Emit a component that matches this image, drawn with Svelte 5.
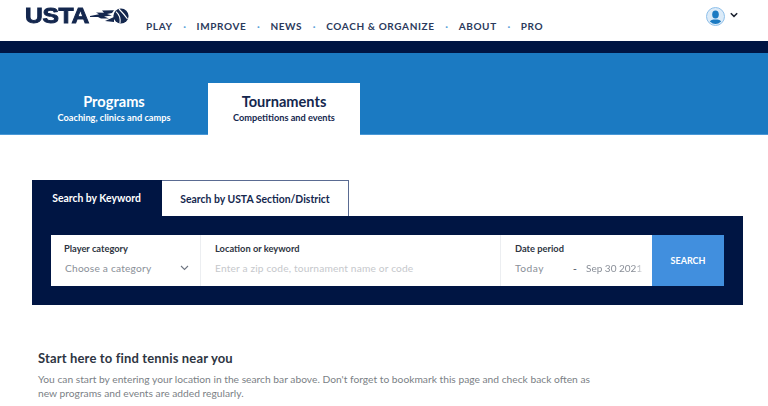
<script>
  const navItems = ['PLAY', 'IMPROVE', 'NEWS', 'COACH & ORGANIZE', 'ABOUT', 'PRO'];
</script>

<div class="page">
  <header class="top">
    <div class="logo">
      <span class="wordmark">USTA</span>
      <svg class="flame" width="40" height="16" viewBox="0 0 40 16" aria-hidden="true">
        <path d="M0 8 L9 6.2 L6 4.6 L14 4.8 L12 2.6 L24 2.2 L22 5 L17 6 L22 7.4 L14 8.6 L19 10.6 L11 10.6 L8 9 L0 9Z" fill="#14274e"/>
        <path d="M15 13 L24 9 L24 14 Z" fill="#14274e"/>
        <circle cx="31" cy="8" r="7.6" fill="#14274e"/>
        <path d="M26 3.6 Q31 8 30 15 M29 1 Q34 6 37.5 11" stroke="#fff" stroke-width="1.1" fill="none"/>
      </svg>
    </div>
    <nav class="nav">
      {#each navItems as item, i}
        {#if i > 0}<span class="dot">·</span>{/if}
        <span class="nav-item">{item}</span>
      {/each}
    </nav>
    <div class="user">
      <svg width="19" height="19" viewBox="0 0 19 19" aria-hidden="true">
        <circle cx="9.5" cy="9.5" r="9" fill="#dcebf8" stroke="#8fc0ea" stroke-width="1"/>
        <clipPath id="ucl"><circle cx="9.5" cy="9.5" r="7.4"/></clipPath>
        <g clip-path="url(#ucl)" fill="#1b7ac2">
          <ellipse cx="9.5" cy="7.6" rx="3.3" ry="4"/>
          <path d="M2 19 Q2.5 13.2 7.5 12.4 L11.5 12.4 Q16.5 13.2 17 19Z"/>
        </g>
      </svg>
      <svg width="8" height="6" viewBox="0 0 8 6" aria-hidden="true">
        <path d="M.8 1.2 L4 4.4 L7.2 1.2" fill="none" stroke="#1c2230" stroke-width="1.5"/>
      </svg>
    </div>
  </header>

  <div class="strip"></div>

  <section class="hero">
    <div class="hero-tab">
      <div class="hero-title">Programs</div>
      <div class="hero-sub">Coaching, clinics and camps</div>
    </div>
    <div class="hero-tab active">
      <div class="hero-title">Tournaments</div>
      <div class="hero-sub">Competitions and events</div>
    </div>
  </section>

  <section class="search">
    <div class="tabs">
      <div class="tab on">Search by Keyword</div>
      <div class="tab off">Search by USTA Section/District</div>
    </div>
    <div class="panel">
      <div class="bar">
        <div class="field cat">
          <div class="label">Player category</div>
          <div class="value select">
            <span>Choose a category</span>
            <svg width="9" height="6" viewBox="0 0 9 6" aria-hidden="true">
              <path d="M1 1 L4.5 4.5 L8 1" fill="none" stroke="#6f7682" stroke-width="1.1"/>
            </svg>
          </div>
        </div>
        <div class="field loc">
          <div class="label">Location or keyword</div>
          <div class="value placeholder">Enter a zip code, tournament name or code</div>
        </div>
        <div class="field date">
          <div class="label">Date period</div>
          <div class="value dates">
            <span class="from">Today</span>
            <span class="dash">-</span>
            <span class="to">Sep 30 2021</span>
          </div>
        </div>
        <div class="btn">SEARCH</div>
      </div>
    </div>
  </section>

  <section class="intro">
    <h2>Start here to find tennis near you</h2>
    <p>You can start by entering your location in the search bar above. Don't forget to bookmark this page and check back often as new programs and events are added regularly.</p>
  </section>
</div>

<style>
  :global(body) {
    margin: 0;
    background: #fff;
  }
  .page {
    width: 768px;
    height: 406px;
    overflow: hidden;
    font-family: Lato, "Open Sans", sans-serif;
    color: #14274e;
  }
  .top {
    height: 41px;
    display: flex;
    box-sizing: border-box;
    padding-left: 25px;
    position: relative;
  }
  .logo {
    display: flex;
    align-items: center;
    height: 18px;
    margin-top: 7px;
    width: 121px;
    flex: none;
  }
  .wordmark {
    font-family: "Liberation Sans", sans-serif;
    font-weight: 700;
    font-size: 22px;
    line-height: 18px;
    color: #14274e;
    letter-spacing: -0.3px;
    -webkit-text-stroke: 0.9px #14274e;
    transform: scaleX(1.12);
    transform-origin: left center;
    width: 65px;
    flex: none;
  }
  .flame {
    flex: none;
  }
  .nav {
    display: flex;
    align-items: center;
    height: 16px;
    margin-top: 18px;
    font-size: 10px;
    font-weight: 700;
    letter-spacing: 0.62px;
    color: #2b3a5c;
  }
  .dot {
    width: 24px;
    text-align: center;
    color: #5aa0d8;
    letter-spacing: 0;
  }
  .nav-item {
    white-space: nowrap;
  }
  .user {
    position: absolute;
    left: 706px;
    top: 7px;
    display: flex;
    align-items: center;
    gap: 5px;
  }
  .user svg:last-child {
    margin-bottom: 3px;
  }
  .strip {
    height: 12px;
    background: #001543;
  }
  .hero {
    height: 81px;
    background: #1b7ac2;
    border-bottom: 1px solid #4a98d6;
    box-sizing: content-box;
    display: flex;
    align-items: flex-end;
    padding-left: 57px;
  }
  .hero-tab {
    height: 51px;
    text-align: center;
    color: #fff;
    width: 151px;
    box-sizing: border-box;
    padding-top: 10px;
  }
  .hero-tab:first-child {
    width: 114px;
    margin-right: 37px;
  }
  .hero-tab.active {
    width: 152px;
    height: 52px;
    margin-bottom: -1px;
    background: #fff;
    color: #14274e;
  }
  .hero-title {
    font-size: 14.6px;
    font-weight: 700;
    line-height: 17px;
    white-space: nowrap;
  }
  .hero-sub {
    font-size: 9.2px;
    font-weight: 700;
    line-height: 12px;
    margin-top: 2px;
    white-space: nowrap;
  }
  .search {
    margin: 45px 25px 0 32px;
  }
  .tabs {
    display: flex;
    height: 36px;
  }
  .tab {
    font-size: 10.4px;
    font-weight: 700;
    display: flex;
    align-items: center;
    justify-content: center;
    box-sizing: border-box;
  }
  .tab.on {
    width: 130px;
    background: #001543;
    color: #fff;
    padding-right: 1px;
  }
  .tab.off {
    width: 187px;
    background: #fff;
    color: #14274e;
    border: 1px solid #5a6b92;
    border-left: none;
    border-bottom: none;
  }
  .panel {
    background: #001543;
    padding: 19px 19px;
    height: 89px;
    box-sizing: border-box;
  }
  .bar {
    display: flex;
    height: 51px;
    background: #fff;
  }
  .field {
    box-sizing: border-box;
    padding: 8px 0 0 14px;
    border-right: 1px solid #eceef1;
  }
  .cat { width: 150px; padding-left: 13px; }
  .loc { width: 300px; }
  .date { width: 151px; border-right: none; }
  .label {
    font-size: 9.3px;
    font-weight: 700;
    line-height: 12px;
    color: #2e3542;
  }
  .value {
    font-size: 10.2px;
    line-height: 14px;
    margin-top: 6px;
    color: #8a8f98;
    white-space: nowrap;
    letter-spacing: 0.2px;
  }
  .select {
    display: flex;
    justify-content: space-between;
    align-items: center;
    padding-right: 11px;
    padding-left: 1px;
  }
  .placeholder {
    color: #c6c8cc;
    letter-spacing: 0.16px;
  }
  .dates {
    display: flex;
  }
  .from { width: 58px; letter-spacing: 0.5px; }
  .dash { width: 13px; font-weight: 700; color: #666c77; }
  .to {
    font-size: 10px;
    letter-spacing: 0;
    -webkit-mask-image: linear-gradient(to right, #000 88%, rgba(0, 0, 0, 0.25) 100%);
    mask-image: linear-gradient(to right, #000 88%, rgba(0, 0, 0, 0.25) 100%);
  }
  .btn {
    width: 72px;
    background: #418fde;
    color: #fff;
    font-size: 9px;
    font-weight: 700;
    display: flex;
    align-items: center;
    justify-content: center;
    padding-bottom: 1px;
    box-sizing: border-box;
  }
  .intro {
    margin: 45px 0 0 38px;
    width: 560px;
  }
  h2 {
    margin: 0;
    font-size: 13px;
    font-weight: 700;
    line-height: 16px;
    color: #2e3542;
    letter-spacing: 0.15px;
  }
  p {
    margin: 7px 0 0;
    font-size: 10.25px;
    line-height: 13.5px;
    color: #7b7f86;
  }
</style>
